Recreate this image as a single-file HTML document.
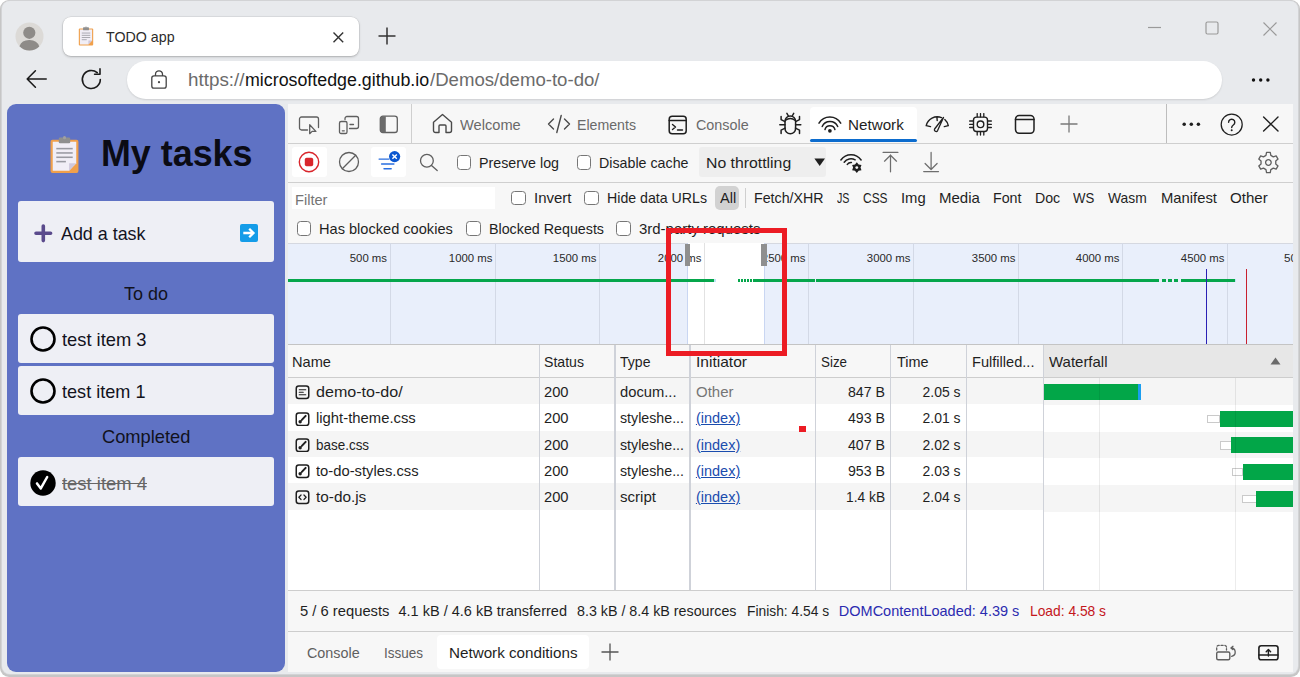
<!DOCTYPE html>
<html lang="en"><head><meta charset="utf-8"><title>TODO app</title>
<style>
html,body{margin:0;padding:0;background:#fff;}
body{width:1300px;height:677px;position:relative;overflow:hidden;font-family:"Liberation Sans", sans-serif;}
.a{position:absolute;display:block;box-sizing:border-box;}
.t{position:absolute;white-space:pre;line-height:1;transform-origin:0 0;}
.r{transform-origin:100% 0;}
</style></head><body>
<div class="a" style="left:0;top:0;width:1300px;height:677px;background:#c6c6c6;border-radius:9px;"></div>
<div class="a" style="left:1.600px;top:1.200px;width:1296.200px;height:673px;background:#e8eaed;border-radius:8px;box-shadow:0 0 0 0.800px #d6d7da;"></div>
<svg class="a" style="left:14.8px;top:22.3px;" width="29" height="29" viewBox="0 0 29 29"><circle cx="14.500" cy="14.500" r="14" fill="#dcdad7"/><circle cx="14.300" cy="10.800" r="6.100" fill="#8e8b88"/><path d="M4.440 24.240A10.300 8.800 0 0 1 24.260 24.540A14 14 0 0 1 4.440 24.240z" fill="#8e8b88"/></svg>
<div class="a" style="left:63px;top:16.800px;width:295.500px;height:39.700px;background:#fff;border-radius:8px;box-shadow:0 0 0 0.600px rgba(0,0,0,.10),0 1px 2.500px rgba(0,0,0,.22);"></div>
<svg class="a" style="left:77.7px;top:26px;" width="16" height="20" viewBox="0 0 20 25"><rect x="1" y="3" width="18" height="21.500" rx="1.300" fill="#f0a04b"/><path d="M2.400 4.400h15.200v13.800l-4.600 4.900H2.400z" fill="#f1eef6"/><path d="M17.600 18.200h-4.600v4.900z" fill="#cfc8dc"/><rect x="6.300" y="1.600" width="7.400" height="3.800" rx="0.800" fill="#8f8f8f"/><circle cx="10" cy="1.700" r="1" fill="#a0a0a0"/><rect x="4.700" y="8.300" width="10.600" height="1" fill="#9a9aa2"/><rect x="4.700" y="11.100" width="10.600" height="1" fill="#9a9aa2"/><rect x="4.700" y="13.900" width="10.600" height="1" fill="#9a9aa2"/><rect x="4.700" y="16.700" width="6.200" height="1" fill="#9a9aa2"/></svg>
<span class="t" style="top:30.03px;font-size:14.5px;color:#2b2b2b;left:106.00px;transform:scaleX(0.9820);">TODO app</span>
<svg class="a" style="left:332px;top:30.5px;" width="13" height="13" viewBox="0 0 13 13"><path d="M1.500 1.500l9.700 9.700M11.200 1.500l-9.700 9.700" stroke="#333" stroke-width="1.400" fill="none"/></svg>
<svg class="a" style="left:378px;top:27px;" width="18" height="18" viewBox="0 0 18 18"><path d="M9 0.500v17M0.500 9h17" stroke="#333" stroke-width="1.500" fill="none"/></svg>
<svg class="a" style="left:1148px;top:26px;" width="14" height="3" viewBox="0 0 14 3"><path d="M0 1.500h13" stroke="#9a9a9a" stroke-width="1.200"/></svg>
<svg class="a" style="left:1205px;top:21px;" width="14" height="14" viewBox="0 0 14 14"><rect x="1" y="1" width="12" height="12" rx="1.500" stroke="#9a9a9a" stroke-width="1.200" fill="none"/></svg>
<svg class="a" style="left:1263px;top:21.5px;" width="14" height="14" viewBox="0 0 14 14"><path d="M0.500 0.500l13 13M13.500 0.500l-13 13" stroke="#9a9a9a" stroke-width="1.200" fill="none"/></svg>
<svg class="a" style="left:26px;top:69px;" width="22" height="20" viewBox="0 0 22 20"><path d="M1.200 10h19M9.400 1.800L1.200 10l8.200 8.200" stroke="#1b1b1b" stroke-width="1.600" fill="none" stroke-linecap="round" stroke-linejoin="round"/></svg>
<svg class="a" style="left:80px;top:68px;" width="23" height="23" viewBox="0 0 23 23"><path d="M20.300 11.500a9 9 0 1 1-3.100-6.800" stroke="#1b1b1b" stroke-width="1.600" fill="none" stroke-linecap="round"/><path d="M14.600 6.300h5.400V0.900" stroke="#1b1b1b" stroke-width="1.600" fill="none" stroke-linecap="round" stroke-linejoin="round"/></svg>
<div class="a" style="left:127px;top:61.300px;width:1095px;height:37.600px;background:#fff;border-radius:18.800px;box-shadow:0 1px 2px rgba(0,0,0,.12);"></div>
<svg class="a" style="left:150px;top:70px;" width="18" height="19" viewBox="0 0 18 19"><rect x="1.800" y="5.900" width="14.400" height="12.300" rx="2.200" stroke="#444" stroke-width="1.300" fill="none"/><path d="M5.500 5.900V4.300a3.500 3.500 0 0 1 7 0v1.600" stroke="#444" stroke-width="1.300" fill="none"/><circle cx="9" cy="12.200" r="1.100" fill="#444"/></svg>
<span class="t" style="top:72.29px;font-size:17.5px;color:#6b6b6b;left:188.00px;transform:scaleX(1.0756);">https://</span>
<span class="t" style="top:72.29px;font-size:17.5px;color:#111;left:244.80px;transform:scaleX(1.0179);">microsoftedge.github.io</span>
<span class="t" style="top:72.29px;font-size:17.5px;color:#6b6b6b;left:429.50px;transform:scaleX(1.0626);">/Demos/demo-to-do/</span>
<svg class="a" style="left:1251px;top:77px;" width="20" height="6" viewBox="0 0 20 6"><circle cx="2.500" cy="3" r="1.700" fill="#111"/><circle cx="9.700" cy="3" r="1.700" fill="#111"/><circle cx="16.900" cy="3" r="1.700" fill="#111"/></svg>
<div class="a" style="left:7px;top:104.2px;width:278px;height:567.6px;background:#5f72c4;border-radius:9px;"></div>
<svg class="a" style="left:49.3px;top:134.8px;" width="31" height="38.7" viewBox="0 0 20 25"><rect x="1" y="3" width="18" height="21.500" rx="1.300" fill="#f0a04b"/><path d="M2.400 4.400h15.200v13.800l-4.600 4.900H2.400z" fill="#f1eef6"/><path d="M17.600 18.200h-4.600v4.900z" fill="#cfc8dc"/><rect x="6.300" y="1.600" width="7.400" height="3.800" rx="0.800" fill="#8f8f8f"/><circle cx="10" cy="1.700" r="1" fill="#a0a0a0"/><rect x="4.700" y="8.300" width="10.600" height="1" fill="#9a9aa2"/><rect x="4.700" y="11.100" width="10.600" height="1" fill="#9a9aa2"/><rect x="4.700" y="13.900" width="10.600" height="1" fill="#9a9aa2"/><rect x="4.700" y="16.700" width="6.200" height="1" fill="#9a9aa2"/></svg>
<span class="t" style="top:135.43px;font-size:37.3px;color:#0b0b14;font-weight:700;left:101.40px;transform:scaleX(0.9614);">My tasks</span>
<div class="a" style="left:18px;top:201px;width:256px;height:61px;background:#eeeff5;border-radius:3px;"></div>
<svg class="a" style="left:34px;top:224px;" width="19" height="19" viewBox="0 0 19 19"><path d="M9.300 2v14.600M2 9.300h14.600" stroke="#5a4a8c" stroke-width="3.600" stroke-linecap="round" fill="none"/></svg>
<span class="t" style="top:224.42px;font-size:19px;color:#14141f;left:61.00px;transform:scaleX(0.9412);">Add a task</span>
<svg class="a" style="left:240px;top:224px;" width="18" height="18" viewBox="0 0 18 18"><rect width="18" height="18" rx="2" fill="#149ce8"/><path d="M3.300 9h10M9.200 4.700l4.300 4.300-4.300 4.300" stroke="#fff" stroke-width="2.300" fill="none"/></svg>
<span class="t" style="top:284.22px;font-size:19px;color:#12121c;left:124.40px;transform:scaleX(0.9466);">To do</span>
<div class="a" style="left:18px;top:314px;width:256px;height:48.5px;background:#eeeff5;border-radius:3px;"></div>
<div class="a" style="left:18px;top:366.3px;width:256px;height:48.5px;background:#eeeff5;border-radius:3px;"></div>
<svg class="a" style="left:30px;top:325.5px;" width="26" height="26" viewBox="0 0 26 26"><circle cx="13" cy="13" r="11.500" stroke="#000" stroke-width="2.600" fill="none"/></svg>
<svg class="a" style="left:30px;top:377.5px;" width="26" height="26" viewBox="0 0 26 26"><circle cx="13" cy="13" r="11.500" stroke="#000" stroke-width="2.600" fill="none"/></svg>
<span class="t" style="top:329.82px;font-size:19px;color:#12121c;left:62.00px;transform:scaleX(0.9640);">test item 3</span>
<span class="t" style="top:381.82px;font-size:19px;color:#12121c;left:62.00px;transform:scaleX(0.9526);">test item 1</span>
<span class="t" style="top:427.22px;font-size:19px;color:#12121c;left:101.80px;transform:scaleX(0.9620);">Completed</span>
<div class="a" style="left:18px;top:457.2px;width:256px;height:49px;background:#eeeff5;border-radius:3px;"></div>
<svg class="a" style="left:30px;top:469.5px;" width="26" height="26" viewBox="0 0 26 26"><circle cx="13" cy="13" r="12.700" fill="#000"/><path d="M7 13.400l3.800 5 6.400-11.400" stroke="#fff" stroke-width="2.500" fill="none" stroke-linecap="round" stroke-linejoin="round"/></svg>
<span class="t" style="top:473.82px;font-size:19px;color:#666;left:62.00px;transform:scaleX(0.9697);text-decoration:line-through;">test item 4</span>
<div class="a" style="left:287.5px;top:104.3px;width:1005.7px;height:567.7px;background:#f7f7f7;"></div>
<div class="a" style="left:287.5px;top:143px;width:1005.7px;height:1px;background:#cfcfcf;"></div>
<div class="a" style="left:411px;top:104.3px;width:1px;height:38.7px;background:#cfcfcf;"></div>
<div class="a" style="left:1166px;top:104.3px;width:1px;height:38.7px;background:#bdbdbd;"></div>
<svg class="a" style="left:298px;top:115px;" width="22" height="20" viewBox="0 0 22 20"><path d="M9.500 15H3.500a2 2 0 0 1-2-2V4a2 2 0 0 1 2-2h15a2 2 0 0 1 2 2v8.500" stroke="#5f5f5f" stroke-width="1.3" fill="none" stroke-linecap="round" stroke-linejoin="round"/><path d="M11.700 9.700v9l2.400-2.300h3.800z" stroke="#5f5f5f" stroke-width="1.3" fill="none" stroke-linecap="round" stroke-linejoin="round"/></svg>
<svg class="a" style="left:338px;top:114px;" width="22" height="21" viewBox="0 0 22 21"><path d="M7 5.500V4.500a2 2 0 0 1 2-2h9.500a2 2 0 0 1 2 2v8a2 2 0 0 1-2 2H11.500" stroke="#5f5f5f" stroke-width="1.3" fill="none" stroke-linecap="round" stroke-linejoin="round"/><rect x="1.500" y="7.500" width="7.500" height="12" rx="1.600" stroke="#5f5f5f" stroke-width="1.3" fill="none" stroke-linecap="round" stroke-linejoin="round"/><path d="M4.300 16.800h2M12 10.500h3.500" stroke="#5f5f5f" stroke-width="1.3" fill="none" stroke-linecap="round" stroke-linejoin="round"/></svg>
<svg class="a" style="left:379.3px;top:114.5px;" width="20" height="19" viewBox="0 0 20 19"><rect x="1.300" y="1.200" width="17" height="16.300" rx="2.600" stroke="#5f5f5f" stroke-width="1.3" fill="none" stroke-linecap="round" stroke-linejoin="round"/><path d="M3.900 1.200h2.900v16.300H3.900a2.600 2.600 0 0 1-2.600-2.600V3.800A2.600 2.600 0 0 1 3.900 1.200z" fill="#6b6b6b"/></svg>
<svg class="a" style="left:432px;top:113px;" width="21" height="21" viewBox="0 0 21 21"><path d="M1.500 9.300L10.500 1.500l9 7.800V17.500a2 2 0 0 1-2 2h-3.500v-6.500a1 1 0 0 0-1-1h-5a1 1 0 0 0-1 1v6.500H3.500a2 2 0 0 1-2-2z" stroke="#4a4a4a" stroke-width="1.4" fill="none" stroke-linecap="round" stroke-linejoin="round"/></svg>
<span class="t" style="top:118.03px;font-size:14.5px;color:#6a6a6a;left:460.00px;transform:scaleX(1.0088);">Welcome</span>
<svg class="a" style="left:547px;top:114px;" width="24" height="20" viewBox="0 0 24 20"><path d="M6.500 5L1.500 10l5 5M17.500 5l5 5-5 5M14.200 1.500L9.800 18.500" stroke="#4a4a4a" stroke-width="1.4" fill="none" stroke-linecap="round" stroke-linejoin="round"/></svg>
<span class="t" style="top:118.03px;font-size:14.5px;color:#6a6a6a;left:577.00px;transform:scaleX(0.9760);">Elements</span>
<svg class="a" style="left:668px;top:114.5px;" width="20" height="20" viewBox="0 0 20 20"><rect x="1.200" y="1.200" width="17" height="17.600" rx="3" stroke="#1f1f1f" fill="none" stroke-linecap="round" stroke-linejoin="round" stroke-width="1.500"/><path d="M1.200 5.600h17" stroke="#1f1f1f" fill="none" stroke-linecap="round" stroke-linejoin="round" stroke-width="1.500"/><path d="M4.500 9.500l3 2.500-3 2.500M9.500 15h5" stroke="#1f1f1f" stroke-width="1.4" fill="none" stroke-linecap="round" stroke-linejoin="round"/></svg>
<span class="t" style="top:118.03px;font-size:14.5px;color:#6a6a6a;left:695.50px;transform:scaleX(0.9905);">Console</span>
<svg class="a" style="left:779px;top:112px;" width="23" height="23" viewBox="0 0 23 23"><rect x="6" y="3.900" width="10.600" height="17.900" rx="5.300" stroke="#1f1f1f" fill="none" stroke-linecap="round" stroke-linejoin="round" stroke-width="1.500"/><path d="M6.600 8.300a7 7 0 0 1 9.400 0M7.900 1.400l1.500 2.600M14.700 1.400l-1.500 2.600M6 12.800H0.800M16.600 12.800h5.200M6 9.600L2.100 7.600V4.600M16.600 9.600l3.900-2V4.600M6.200 16.200l-4.100 2v3.200M16.400 16.200l4.100 2v3.200" stroke="#1f1f1f" fill="none" stroke-linecap="round" stroke-linejoin="round" stroke-width="1.500"/></svg>
<div class="a" style="left:810px;top:107px;width:107px;height:34.500px;background:#fff;border-radius:4px 4px 0 0;"></div>
<div class="a" style="left:810px;top:139px;width:107px;height:3.2px;background:#0c6cce;border-radius:2px;"></div>
<svg class="a" style="left:818px;top:116px;" width="24" height="18" viewBox="0 0 24 18"><path d="M1 7.200A12.600 12.600 0 0 1 22.700 7.200M4.200 10.500A8.500 8.500 0 0 1 19.700 10.500M7 13.500A5.100 5.100 0 0 1 16.900 13.500" stroke="#1f1f1f" fill="none" stroke-linecap="round" stroke-linejoin="round" stroke-width="1.500"/><circle cx="11.900" cy="14.800" r="1.850" fill="#1f1f1f"/></svg>
<span class="t" style="top:118.03px;font-size:14.5px;color:#1f1f1f;left:847.50px;transform:scaleX(1.0491);">Network</span>
<svg class="a" style="left:925px;top:116px;" width="25" height="17" viewBox="0 0 25 17"><path d="M1.200 9.600A11.500 11.500 0 0 1 16.500 1.600M19.800 3.600A11.500 11.500 0 0 1 23.300 9.600M1.200 9.600l4.300 1M23.300 9.600l-4 1M11.900 0.900l0.300 3.600" stroke="#1f1f1f" stroke-width="1.4" fill="none" stroke-linecap="round" stroke-linejoin="round"/><path d="M18.500 1.500L12.600 14.600a1.700 1.700 0 0 1-3-1.600z" stroke="#1f1f1f" fill="none" stroke-linecap="round" stroke-linejoin="round" stroke-width="1.300"/></svg>
<svg class="a" style="left:969px;top:113px;" width="23" height="23" viewBox="0 0 23 23"><rect x="4.500" y="4.100" width="14" height="14.400" rx="3" stroke="#1f1f1f" stroke-width="1.4" fill="none" stroke-linecap="round" stroke-linejoin="round"/><circle cx="11.500" cy="11.300" r="3.300" stroke="#1f1f1f" stroke-width="1.4" fill="none" stroke-linecap="round" stroke-linejoin="round"/><path d="M8.200 0.600v3.200M11.500 0.600v3.200M14.800 0.600v3.200M8.200 18.800v3.200M11.500 18.800v3.200M14.800 18.800v3.200M0.600 8h3.600M0.600 11.300h3.600M0.600 14.500h3.600M18.800 8h3.600M18.800 11.300h3.600M18.800 14.500h3.600" stroke="#1f1f1f" fill="none" stroke-linecap="round" stroke-linejoin="round" stroke-width="1.300"/></svg>
<svg class="a" style="left:1014px;top:114px;" width="21" height="21" viewBox="0 0 21 21"><rect x="1.500" y="1.500" width="18.500" height="17.700" rx="3.600" stroke="#1f1f1f" fill="none" stroke-linecap="round" stroke-linejoin="round" stroke-width="1.500"/><path d="M1.500 5.600h18.500" stroke="#1f1f1f" fill="none" stroke-linecap="round" stroke-linejoin="round" stroke-width="1.500"/></svg>
<svg class="a" style="left:1060px;top:115px;" width="18" height="18" viewBox="0 0 18 18"><path d="M9 0.500v17M0.500 9h17" stroke="#7a7a7a" stroke-width="1.300" fill="none"/></svg>
<svg class="a" style="left:1182px;top:121px;" width="19" height="6.5" viewBox="0 0 19 6.5"><circle cx="2.200" cy="3.250" r="1.750" fill="#1f1f1f"/><circle cx="9.300" cy="3.250" r="1.750" fill="#1f1f1f"/><circle cx="16.400" cy="3.250" r="1.750" fill="#1f1f1f"/></svg>
<svg class="a" style="left:1219.5px;top:112.5px;" width="23" height="23" viewBox="0 0 23 23"><circle cx="11.700" cy="11.500" r="10.500" stroke="#1f1f1f" fill="none" stroke-linecap="round" stroke-linejoin="round" stroke-width="1.250"/><path d="M8.600 9.300a3.100 3.100 0 1 1 4.700 2.700c-1 .7-1.600 1.200-1.600 2.600" stroke="#1f1f1f" fill="none" stroke-linecap="round" stroke-linejoin="round" stroke-width="1.400"/><circle cx="11.700" cy="17.200" r="1" fill="#1f1f1f"/></svg>
<svg class="a" style="left:1262px;top:116px;" width="18" height="17" viewBox="0 0 18 17"><path d="M1.600 1.100l14.400 14M16 1.100L1.600 15.100" stroke="#1f1f1f" fill="none" stroke-linecap="round" stroke-linejoin="round" stroke-width="1.400"/></svg>
<div class="a" style="left:287.5px;top:182px;width:1005.7px;height:1px;background:#cfcfcf;"></div>
<div class="a" style="left:291.5px;top:147.2px;width:35px;height:29.5px;background:#fff;border-radius:3px;"></div>
<svg class="a" style="left:298px;top:151px;" width="22" height="22" viewBox="0 0 22 22"><circle cx="11" cy="11" r="9.700" stroke="#d9262c" stroke-width="1.400" fill="none"/><rect x="6.800" y="6.800" width="8.400" height="8.400" rx="1.800" fill="#d9262c"/></svg>
<svg class="a" style="left:338px;top:151px;" width="22" height="22" viewBox="0 0 22 22"><circle cx="11" cy="11" r="9.500" stroke="#5f5f5f" stroke-width="1.3" fill="none" stroke-linecap="round" stroke-linejoin="round"/><path d="M17.700 4.300L4.300 17.700" stroke="#5f5f5f" stroke-width="1.3" fill="none" stroke-linecap="round" stroke-linejoin="round"/></svg>
<div class="a" style="left:371px;top:147.2px;width:35px;height:29.5px;background:#fff;border-radius:3px;"></div>
<svg class="a" style="left:377px;top:150px;" width="25" height="22" viewBox="0 0 25 22"><path d="M2.100 9.100h9.700M4.600 14h12.300M7 18.800h7.200" stroke="#2a6fe0" stroke-width="1.400" fill="none" stroke-linecap="round"/><circle cx="17.600" cy="6.600" r="5.600" fill="#0b57d0"/><path d="M15.400 4.400l4.400 4.400M19.800 4.400l-4.400 4.400" stroke="#fff" stroke-width="1.400" fill="none"/></svg>
<svg class="a" style="left:418px;top:152px;" width="21" height="21" viewBox="0 0 21 21"><circle cx="8.900" cy="8.800" r="6.400" stroke="#5f5f5f" stroke-width="1.3" fill="none" stroke-linecap="round" stroke-linejoin="round"/><path d="M13.500 13.400l5.700 5.200" stroke="#5f5f5f" stroke-width="1.3" fill="none" stroke-linecap="round" stroke-linejoin="round"/></svg>
<div class="a" style="left:456.5px;top:155px;width:14.800px;height:14.800px;background:#fff;border:1.400px solid #767676;border-radius:3.500px;"></div>
<span class="t" style="top:156.13px;font-size:14.5px;color:#1f1f1f;left:479.00px;transform:scaleX(0.9827);">Preserve log</span>
<div class="a" style="left:576.5px;top:155px;width:14.800px;height:14.800px;background:#fff;border:1.400px solid #767676;border-radius:3.500px;"></div>
<span class="t" style="top:156.13px;font-size:14.5px;color:#1f1f1f;left:598.50px;transform:scaleX(0.9827);">Disable cache</span>
<div class="a" style="left:699px;top:147.2px;width:127px;height:29.5px;background:#eeeeee;border-radius:3px;"></div>
<span class="t" style="top:156.13px;font-size:14.5px;color:#1f1f1f;left:706.30px;transform:scaleX(1.0897);">No throttling</span>
<svg class="a" style="left:813.5px;top:158.3px;" width="12" height="9" viewBox="0 0 12 9"><path d="M0.400 0.400h10.600L5.700 8z" fill="#1f1f1f"/></svg>
<svg class="a" style="left:840px;top:152px;" width="24" height="22" viewBox="0 0 24 22"><path d="M0.900 7.950A12.300 12.300 0 0 1 21.100 7.950M4.200 10.240A8.300 8.300 0 0 1 15.150 7.810M7.310 12.420A4.500 4.500 0 0 1 11.400 10.520" stroke="#1f1f1f" fill="none" stroke-linecap="round" stroke-linejoin="round" stroke-width="1.500"/><polygon points="16.80,10.20 18.65,12.40 21.48,12.90 20.50,15.60 21.48,18.30 18.65,18.80 16.80,21.00 14.95,18.80 12.12,18.30 13.10,15.60 12.12,12.90 14.95,12.40" fill="#1f1f1f" stroke="#f7f7f7" stroke-width="1.200" paint-order="stroke"/><circle cx="16.800" cy="15.600" r="1.400" fill="#f7f7f7"/></svg>
<svg class="a" style="left:882px;top:151px;" width="18" height="22" viewBox="0 0 18 22"><path d="M1.100 1.400h14.800M8.500 20.800V3.900M2.500 10.200l6-6 6 6" stroke="#6e6e6e" stroke-width="1.250" fill="none" stroke-linecap="round" stroke-linejoin="round"/></svg>
<svg class="a" style="left:922px;top:151px;" width="18" height="22" viewBox="0 0 18 22"><path d="M1.700 20.500h14.800M9.100 1.400v17M3.100 12.500l6 6 6-6" stroke="#6e6e6e" stroke-width="1.250" fill="none" stroke-linecap="round" stroke-linejoin="round"/></svg>
<svg class="a" style="left:1257px;top:150.6px;" width="23" height="23" viewBox="0 0 23 23"><g transform="translate(11.400 11.500)"><path d="M-2.44 -7.09L-1.86 -10.03L1.86 -10.03L2.44 -7.09L4.92 -5.66L7.76 -6.62L9.61 -3.40L7.36 -1.43L7.36 1.43L9.61 3.40L7.76 6.62L4.92 5.66L2.44 7.09L1.86 10.03L-1.86 10.03L-2.44 7.09L-4.92 5.66L-7.76 6.62L-9.61 3.40L-7.36 1.43L-7.36 -1.43L-9.61 -3.40L-7.76 -6.62L-4.92 -5.66z" stroke="#5f5f5f" stroke-width="1.300" fill="none" stroke-linejoin="round"/><circle r="2.800" stroke="#5f5f5f" stroke-width="1.300" fill="none"/></g></svg>
<div class="a" style="left:291.5px;top:186.7px;width:203.5px;height:22px;background:#fff;"></div>
<span class="t" style="top:192.63px;font-size:14.5px;color:#757575;left:295.20px;transform:scaleX(1.0082);">Filter</span>
<div class="a" style="left:511px;top:190.5px;width:14.800px;height:14.800px;background:#fff;border:1.400px solid #767676;border-radius:3.500px;"></div>
<span class="t" style="top:191.33px;font-size:14.5px;color:#1f1f1f;left:533.70px;transform:scaleX(1.0340);">Invert</span>
<div class="a" style="left:584px;top:190.5px;width:14.800px;height:14.800px;background:#fff;border:1.400px solid #767676;border-radius:3.500px;"></div>
<span class="t" style="top:191.33px;font-size:14.5px;color:#1f1f1f;left:606.80px;transform:scaleX(0.9770);">Hide data URLs</span>
<div class="a" style="left:714.8px;top:186px;width:24.4px;height:23.8px;background:#d2d2d2;border-radius:5px;"></div>
<span class="t" style="top:191.33px;font-size:14.5px;color:#1f1f1f;left:719.50px;transform:scaleX(1.0047);">All</span>
<div class="a" style="left:745px;top:188px;width:1px;height:19.5px;background:#cfcfcf;"></div>
<span class="t" style="top:191.33px;font-size:14.5px;color:#1f1f1f;left:754.00px;transform:scaleX(0.9814);">Fetch/XHR</span>
<span class="t" style="top:191.33px;font-size:14.5px;color:#1f1f1f;left:837.00px;transform:scaleX(0.7387);">JS</span>
<span class="t" style="top:191.33px;font-size:14.5px;color:#1f1f1f;left:862.60px;transform:scaleX(0.8247);">CSS</span>
<span class="t" style="top:191.33px;font-size:14.5px;color:#1f1f1f;left:900.80px;transform:scaleX(1.0218);">Img</span>
<span class="t" style="top:191.33px;font-size:14.5px;color:#1f1f1f;left:938.50px;transform:scaleX(1.0354);">Media</span>
<span class="t" style="top:191.33px;font-size:14.5px;color:#1f1f1f;left:993.00px;transform:scaleX(0.9822);">Font</span>
<span class="t" style="top:191.33px;font-size:14.5px;color:#1f1f1f;left:1034.80px;transform:scaleX(0.9769);">Doc</span>
<span class="t" style="top:191.33px;font-size:14.5px;color:#1f1f1f;left:1073.20px;transform:scaleX(0.9118);">WS</span>
<span class="t" style="top:191.33px;font-size:14.5px;color:#1f1f1f;left:1108.30px;transform:scaleX(0.9545);">Wasm</span>
<span class="t" style="top:191.33px;font-size:14.5px;color:#1f1f1f;left:1161.00px;transform:scaleX(1.0217);">Manifest</span>
<span class="t" style="top:191.33px;font-size:14.5px;color:#1f1f1f;left:1230.00px;transform:scaleX(1.0396);">Other</span>
<div class="a" style="left:296.5px;top:221px;width:14.800px;height:14.800px;background:#fff;border:1.400px solid #767676;border-radius:3.500px;"></div>
<span class="t" style="top:221.63px;font-size:14.5px;color:#1f1f1f;left:319.00px;transform:scaleX(1.0060);">Has blocked cookies</span>
<div class="a" style="left:466px;top:221px;width:14.800px;height:14.800px;background:#fff;border:1.400px solid #767676;border-radius:3.500px;"></div>
<span class="t" style="top:221.63px;font-size:14.5px;color:#1f1f1f;left:488.50px;transform:scaleX(0.9840);">Blocked Requests</span>
<div class="a" style="left:616.3px;top:221px;width:14.800px;height:14.800px;background:#fff;border:1.400px solid #767676;border-radius:3.500px;"></div>
<span class="t" style="top:221.63px;font-size:14.5px;color:#1f1f1f;left:639.40px;transform:scaleX(1.0317);">3rd-party requests</span>
<div class="a" style="left:287.5px;top:243.3px;width:1005.7px;height:100.89999999999998px;background:#e9effb;"></div>
<div class="a" style="left:287.5px;top:242.60000000000002px;width:1005.7px;height:1px;background:#d5d8e0;"></div>
<div class="a" style="left:686.6px;top:243.3px;width:78px;height:100.89999999999998px;background:#fff;"></div>
<div class="a" style="left:686.6px;top:243.3px;width:1px;height:100.89999999999998px;background:#c9d6f2;"></div>
<div class="a" style="left:764px;top:243.3px;width:1px;height:100.89999999999998px;background:#c9d6f2;"></div>
<div class="a" style="left:390.0px;top:243.3px;width:1px;height:100.89999999999998px;background:#d3d9e6;"></div>
<span class="t r" style="top:252.28px;font-size:11.6px;color:#2a2a2a;right:912.50px;transform:scaleX(0.9808);">500 ms</span>
<div class="a" style="left:494.6px;top:243.3px;width:1px;height:100.89999999999998px;background:#d3d9e6;"></div>
<span class="t r" style="top:252.28px;font-size:11.6px;color:#2a2a2a;right:807.90px;transform:scaleX(0.9805);">1000 ms</span>
<div class="a" style="left:599.2px;top:243.3px;width:1px;height:100.89999999999998px;background:#d3d9e6;"></div>
<span class="t r" style="top:252.28px;font-size:11.6px;color:#2a2a2a;right:703.30px;transform:scaleX(0.9805);">1500 ms</span>
<div class="a" style="left:703.8px;top:243.3px;width:1px;height:100.89999999999998px;background:#e2e2e2;"></div>
<span class="t r" style="top:252.28px;font-size:11.6px;color:#2a2a2a;right:598.70px;transform:scaleX(0.9805);">2000 ms</span>
<div class="a" style="left:808.4px;top:243.3px;width:1px;height:100.89999999999998px;background:#d3d9e6;"></div>
<span class="t r" style="top:252.28px;font-size:11.6px;color:#2a2a2a;right:494.10px;transform:scaleX(0.9805);">2500 ms</span>
<div class="a" style="left:913.0px;top:243.3px;width:1px;height:100.89999999999998px;background:#d3d9e6;"></div>
<span class="t r" style="top:252.28px;font-size:11.6px;color:#2a2a2a;right:389.50px;transform:scaleX(0.9805);">3000 ms</span>
<div class="a" style="left:1017.6px;top:243.3px;width:1px;height:100.89999999999998px;background:#d3d9e6;"></div>
<span class="t r" style="top:252.28px;font-size:11.6px;color:#2a2a2a;right:284.90px;transform:scaleX(0.9805);">3500 ms</span>
<div class="a" style="left:1122.2px;top:243.3px;width:1px;height:100.89999999999998px;background:#d3d9e6;"></div>
<span class="t r" style="top:252.28px;font-size:11.6px;color:#2a2a2a;right:180.30px;transform:scaleX(0.9805);">4000 ms</span>
<div class="a" style="left:1226.8px;top:243.3px;width:1px;height:100.89999999999998px;background:#d3d9e6;"></div>
<span class="t r" style="top:252.28px;font-size:11.6px;color:#2a2a2a;right:75.70px;transform:scaleX(0.9805);">4500 ms</span>
<span class="t" style="top:252.28px;font-size:11.6px;color:#2a2a2a;left:1284.00px;transform:scaleX(1.0073);clip-path:inset(0 3.900px 0 0);">50</span>
<div class="a" style="left:684.8px;top:244px;width:5.6px;height:21.5px;background:#8f8f8f;"></div>
<div class="a" style="left:761.3px;top:244px;width:5.6px;height:21.5px;background:#8f8f8f;"></div>
<div class="a" style="left:287.5px;top:279px;width:426.5px;height:3px;background:#05a64b;"></div>
<div class="a" style="left:714px;top:279px;width:2px;height:3px;background:#bfe3f5;"></div>
<div class="a" style="left:738px;top:279px;width:1.7px;height:3px;background:#05a64b;"></div>
<div class="a" style="left:741px;top:279px;width:1.7px;height:3px;background:#05a64b;"></div>
<div class="a" style="left:744px;top:279px;width:1.7px;height:3px;background:#05a64b;"></div>
<div class="a" style="left:747px;top:279px;width:1.7px;height:3px;background:#05a64b;"></div>
<div class="a" style="left:750px;top:279px;width:1.7px;height:3px;background:#05a64b;"></div>
<div class="a" style="left:753px;top:279px;width:62px;height:3px;background:#05a64b;"></div>
<div class="a" style="left:816.3px;top:279px;width:343.10000000000014px;height:3px;background:#05a64b;"></div>
<div class="a" style="left:1162px;top:279px;width:4.3px;height:3px;background:#05a64b;"></div>
<div class="a" style="left:1167.8px;top:279px;width:4.3px;height:3px;background:#05a64b;"></div>
<div class="a" style="left:1174px;top:279px;width:4.3px;height:3px;background:#05a64b;"></div>
<div class="a" style="left:1180.8px;top:279px;width:54.5px;height:3px;background:#05a64b;"></div>
<div class="a" style="left:1235.3px;top:279px;width:1.2px;height:3px;background:#bfe3f5;"></div>
<div class="a" style="left:1206px;top:268.8px;width:1.3px;height:75.39999999999998px;background:#2a1fb4;"></div>
<div class="a" style="left:1246px;top:268.8px;width:1.3px;height:75.39999999999998px;background:#c8202f;"></div>
<div class="a" style="left:287.5px;top:344.2px;width:1005.7px;height:1.2px;background:#c4c4c4;"></div>
<div class="a" style="left:287.5px;top:345.2px;width:1005.7px;height:245.3px;background:#fff;"></div>
<div class="a" style="left:287.5px;top:345.2px;width:1005.7px;height:32.30000000000001px;background:#f7f7f7;"></div>
<div class="a" style="left:1043.5px;top:345.2px;width:249.70000000000005px;height:32.30000000000001px;background:#e7e7e7;"></div>
<div class="a" style="left:287.5px;top:378.2px;width:1005.7px;height:26.30000000000001px;background:#f5f5f5;"></div>
<div class="a" style="left:287.5px;top:430.8px;width:1005.7px;height:26.30000000000001px;background:#f5f5f5;"></div>
<div class="a" style="left:287.5px;top:483.4px;width:1005.7px;height:26.30000000000001px;background:#f5f5f5;"></div>
<div class="a" style="left:287.5px;top:377px;width:1005.7px;height:1px;background:#cdcdcd;"></div>
<div class="a" style="left:538.8px;top:345.2px;width:1.2px;height:245.3px;background:#cfd2d9;"></div>
<div class="a" style="left:614.4px;top:345.2px;width:1.2px;height:245.3px;background:#cfd2d9;"></div>
<div class="a" style="left:689.4px;top:345.2px;width:1.2px;height:245.3px;background:#cfd2d9;"></div>
<div class="a" style="left:814.6px;top:345.2px;width:1.2px;height:245.3px;background:#cfd2d9;"></div>
<div class="a" style="left:889.8px;top:345.2px;width:1.2px;height:245.3px;background:#cfd2d9;"></div>
<div class="a" style="left:965.8px;top:345.2px;width:1.2px;height:245.3px;background:#cfd2d9;"></div>
<div class="a" style="left:1042.6000000000001px;top:345.2px;width:1.2px;height:245.3px;background:#cfd2d9;"></div>
<span class="t" style="top:354.83px;font-size:14.5px;color:#1f1f1f;left:292.30px;transform:scaleX(1.0081);">Name</span>
<span class="t" style="top:354.83px;font-size:14.5px;color:#1f1f1f;left:543.90px;transform:scaleX(0.9730);">Status</span>
<span class="t" style="top:354.83px;font-size:14.5px;color:#1f1f1f;left:620.00px;transform:scaleX(0.9702);">Type</span>
<span class="t" style="top:354.83px;font-size:14.5px;color:#1f1f1f;left:695.90px;transform:scaleX(1.0723);">Initiator</span>
<span class="t" style="top:354.83px;font-size:14.5px;color:#1f1f1f;left:821.00px;transform:scaleX(0.9214);">Size</span>
<span class="t" style="top:354.83px;font-size:14.5px;color:#1f1f1f;left:896.50px;transform:scaleX(0.9941);">Time</span>
<span class="t" style="top:354.83px;font-size:14.5px;color:#1f1f1f;left:972.00px;transform:scaleX(1.0070);">Fulfilled...</span>
<span class="t" style="top:354.83px;font-size:14.5px;color:#1f1f1f;left:1048.80px;transform:scaleX(1.0323);">Waterfall</span>
<svg class="a" style="left:1269.5px;top:356.5px;" width="11" height="8" viewBox="0 0 11 8"><path d="M5.500 0.500L10.500 7.500H0.500z" fill="#6b6b6b"/></svg>
<svg class="a" style="left:294.8px;top:385.2px;" width="15" height="14.5" viewBox="0 0 14.500 14.500"><rect x="1" y="1" width="12.500" height="12.500" rx="2.500" stroke="#1f1f1f" stroke-width="1.500" fill="none" stroke-linejoin="round" stroke-linecap="round"/><path d="M4 4.700h6.500M4 7.250h4M4 9.800h6.500" stroke="#1f1f1f" fill="none" stroke-linejoin="round" stroke-linecap="round" stroke-width="1.100"/></svg>
<span class="t" style="top:384.93px;font-size:14.5px;color:#1f1f1f;left:316.00px;transform:scaleX(1.1089);">demo-to-do/</span>
<span class="t" style="top:384.93px;font-size:14.5px;color:#1f1f1f;left:543.90px;transform:scaleX(1.0123);">200</span>
<span class="t" style="top:384.93px;font-size:14.5px;color:#1f1f1f;left:620.00px;transform:scaleX(1.0160);">docum...</span>
<span class="t" style="top:384.93px;font-size:14.5px;color:#767676;left:695.90px;transform:scaleX(1.0340);">Other</span>
<span class="t r" style="top:384.93px;font-size:14.5px;color:#1f1f1f;right:414.80px;transform:scaleX(0.9761);">847 B</span>
<span class="t r" style="top:384.93px;font-size:14.5px;color:#1f1f1f;right:339.20px;transform:scaleX(0.9620);">2.05 s</span>
<svg class="a" style="left:294.8px;top:411.5px;" width="15" height="14.5" viewBox="0 0 14.500 14.500"><rect x="1" y="1" width="12.500" height="12.500" rx="2.500" stroke="#1f1f1f" stroke-width="1.500" fill="none" stroke-linejoin="round" stroke-linecap="round"/><path d="M10.400 3.900L6.600 7.900" stroke="#1f1f1f" fill="none" stroke-linejoin="round" stroke-linecap="round" stroke-width="2"/><circle cx="4.900" cy="9.700" r="1.700" fill="#1f1f1f"/></svg>
<span class="t" style="top:411.23px;font-size:14.5px;color:#1f1f1f;left:316.00px;transform:scaleX(1.0234);">light-theme.css</span>
<span class="t" style="top:411.23px;font-size:14.5px;color:#1f1f1f;left:543.90px;transform:scaleX(1.0123);">200</span>
<span class="t" style="top:411.23px;font-size:14.5px;color:#1f1f1f;left:620.00px;transform:scaleX(0.9804);">styleshe...</span>
<span class="t" style="top:411.23px;font-size:14.5px;color:#1a4cae;left:695.90px;text-decoration:underline;">(index)</span>
<span class="t r" style="top:411.23px;font-size:14.5px;color:#1f1f1f;right:414.80px;transform:scaleX(0.9761);">493 B</span>
<span class="t r" style="top:411.23px;font-size:14.5px;color:#1f1f1f;right:339.20px;transform:scaleX(0.9620);">2.01 s</span>
<svg class="a" style="left:294.8px;top:437.8px;" width="15" height="14.5" viewBox="0 0 14.500 14.500"><rect x="1" y="1" width="12.500" height="12.500" rx="2.500" stroke="#1f1f1f" stroke-width="1.500" fill="none" stroke-linejoin="round" stroke-linecap="round"/><path d="M10.400 3.900L6.600 7.900" stroke="#1f1f1f" fill="none" stroke-linejoin="round" stroke-linecap="round" stroke-width="2"/><circle cx="4.900" cy="9.700" r="1.700" fill="#1f1f1f"/></svg>
<span class="t" style="top:437.53px;font-size:14.5px;color:#1f1f1f;left:316.00px;transform:scaleX(0.9278);">base.css</span>
<span class="t" style="top:437.53px;font-size:14.5px;color:#1f1f1f;left:543.90px;transform:scaleX(1.0123);">200</span>
<span class="t" style="top:437.53px;font-size:14.5px;color:#1f1f1f;left:620.00px;transform:scaleX(0.9804);">styleshe...</span>
<span class="t" style="top:437.53px;font-size:14.5px;color:#1a4cae;left:695.90px;text-decoration:underline;">(index)</span>
<span class="t r" style="top:437.53px;font-size:14.5px;color:#1f1f1f;right:414.80px;transform:scaleX(0.9761);">407 B</span>
<span class="t r" style="top:437.53px;font-size:14.5px;color:#1f1f1f;right:339.20px;transform:scaleX(0.9620);">2.02 s</span>
<svg class="a" style="left:294.8px;top:464.1px;" width="15" height="14.5" viewBox="0 0 14.500 14.500"><rect x="1" y="1" width="12.500" height="12.500" rx="2.500" stroke="#1f1f1f" stroke-width="1.500" fill="none" stroke-linejoin="round" stroke-linecap="round"/><path d="M10.400 3.900L6.600 7.900" stroke="#1f1f1f" fill="none" stroke-linejoin="round" stroke-linecap="round" stroke-width="2"/><circle cx="4.900" cy="9.700" r="1.700" fill="#1f1f1f"/></svg>
<span class="t" style="top:463.83px;font-size:14.5px;color:#1f1f1f;left:316.00px;transform:scaleX(1.0185);">to-do-styles.css</span>
<span class="t" style="top:463.83px;font-size:14.5px;color:#1f1f1f;left:543.90px;transform:scaleX(1.0123);">200</span>
<span class="t" style="top:463.83px;font-size:14.5px;color:#1f1f1f;left:620.00px;transform:scaleX(0.9804);">styleshe...</span>
<span class="t" style="top:463.83px;font-size:14.5px;color:#1a4cae;left:695.90px;text-decoration:underline;">(index)</span>
<span class="t r" style="top:463.83px;font-size:14.5px;color:#1f1f1f;right:414.80px;transform:scaleX(0.9761);">953 B</span>
<span class="t r" style="top:463.83px;font-size:14.5px;color:#1f1f1f;right:339.20px;transform:scaleX(0.9620);">2.03 s</span>
<svg class="a" style="left:294.8px;top:490.4px;" width="15" height="14.5" viewBox="0 0 14.500 14.500"><rect x="1" y="1" width="12.500" height="12.500" rx="2.500" stroke="#1f1f1f" stroke-width="1.500" fill="none" stroke-linejoin="round" stroke-linecap="round"/><path d="M5.800 5L3.600 7.250l2.200 2.250M8.700 5l2.200 2.250-2.200 2.250" stroke="#1f1f1f" fill="none" stroke-linejoin="round" stroke-linecap="round" stroke-width="1.200"/></svg>
<span class="t" style="top:490.13px;font-size:14.5px;color:#1f1f1f;left:316.00px;transform:scaleX(1.0576);">to-do.js</span>
<span class="t" style="top:490.13px;font-size:14.5px;color:#1f1f1f;left:543.90px;transform:scaleX(1.0123);">200</span>
<span class="t" style="top:490.13px;font-size:14.5px;color:#1f1f1f;left:620.00px;transform:scaleX(1.0388);">script</span>
<span class="t" style="top:490.13px;font-size:14.5px;color:#1a4cae;left:695.90px;text-decoration:underline;">(index)</span>
<span class="t r" style="top:490.13px;font-size:14.5px;color:#1f1f1f;right:414.80px;transform:scaleX(0.9487);">1.4 kB</span>
<span class="t r" style="top:490.13px;font-size:14.5px;color:#1f1f1f;right:339.20px;transform:scaleX(0.9620);">2.04 s</span>
<div class="a" style="left:1043.7px;top:378px;width:249.5px;height:27px;background:#f5f5f5;"></div>
<div class="a" style="left:1043.7px;top:405px;width:249.5px;height:26.69999999999999px;background:#fff;"></div>
<div class="a" style="left:1043.7px;top:431.7px;width:249.5px;height:26.69999999999999px;background:#f5f5f5;"></div>
<div class="a" style="left:1043.7px;top:458.4px;width:249.5px;height:26.600000000000023px;background:#fff;"></div>
<div class="a" style="left:1043.7px;top:485px;width:249.5px;height:26.5px;background:#f5f5f5;"></div>
<div class="a" style="left:1043.5px;top:383.8px;width:94.5px;height:16.2px;background:#02a648;"></div>
<div class="a" style="left:1138px;top:383.8px;width:3.2px;height:16.2px;background:#1a9ef0;"></div>
<div class="a" style="left:1207.2px;top:414.5px;width:13.1px;height:8.400px;background:#fff;border:1px solid #cacaca;"></div>
<div class="a" style="left:1220px;top:410.5px;width:73.20000000000005px;height:16.3px;background:#02a648;"></div>
<div class="a" style="left:1220px;top:441.2px;width:11.5px;height:8.400px;background:#fff;border:1px solid #cacaca;"></div>
<div class="a" style="left:1231.2px;top:437.2px;width:62.0px;height:16.3px;background:#02a648;"></div>
<div class="a" style="left:1232px;top:467.9px;width:11.1px;height:8.400px;background:#fff;border:1px solid #cacaca;"></div>
<div class="a" style="left:1242.8px;top:463.9px;width:50.40000000000009px;height:16.3px;background:#02a648;"></div>
<div class="a" style="left:1242.3px;top:494.6px;width:14.4px;height:8.400px;background:#fff;border:1px solid #cacaca;"></div>
<div class="a" style="left:1256.4px;top:490.6px;width:36.799999999999955px;height:16.3px;background:#02a648;"></div>
<div class="a" style="left:1099.1px;top:378px;width:1px;height:212.5px;background:rgba(0,0,0,0.075);"></div>
<div class="a" style="left:1234.9px;top:378px;width:1px;height:212.5px;background:rgba(0,0,0,0.075);"></div>
<div class="a" style="left:799px;top:426px;width:7px;height:6px;background:#ec1c24;"></div>
<div class="a" style="left:287.5px;top:590.5px;width:1005.7px;height:41px;background:#f7f7f7;"></div>
<div class="a" style="left:287.5px;top:590px;width:1005.7px;height:1px;background:#cdcdcd;"></div>
<div class="a" style="left:287.5px;top:631px;width:1005.7px;height:1.2px;background:#cdcdcd;"></div>
<span class="t" style="top:604.33px;font-size:14.5px;color:#1f1f1f;left:300.00px;transform:scaleX(1.0187);">5 / 6 requests</span>
<span class="t" style="top:604.33px;font-size:14.5px;color:#1f1f1f;left:398.50px;">4.1 kB / 4.6 kB transferred</span>
<span class="t" style="top:604.33px;font-size:14.5px;color:#1f1f1f;left:577.30px;transform:scaleX(0.9846);">8.3 kB / 8.4 kB resources</span>
<span class="t" style="top:604.33px;font-size:14.5px;color:#1f1f1f;left:746.60px;transform:scaleX(0.9530);">Finish: 4.54 s</span>
<span class="t" style="top:604.33px;font-size:14.5px;color:#2b2bb0;left:838.80px;">DOMContentLoaded: 4.39 s</span>
<span class="t" style="top:604.33px;font-size:14.5px;color:#c4161c;left:1030.00px;transform:scaleX(0.9520);">Load: 4.58 s</span>
<div class="a" style="left:287.5px;top:632.2px;width:1005.7px;height:39.799999999999955px;background:#f7f7f7;"></div>
<div class="a" style="left:436.7px;top:635px;width:152.6px;height:33.5px;background:#fff;border-radius:4px;"></div>
<span class="t" style="top:646.03px;font-size:14.5px;color:#5f5f5f;left:306.80px;transform:scaleX(0.9905);">Console</span>
<span class="t" style="top:646.03px;font-size:14.5px;color:#5f5f5f;left:384.00px;transform:scaleX(0.9303);">Issues</span>
<span class="t" style="top:646.03px;font-size:14.5px;color:#1f1f1f;left:448.60px;transform:scaleX(1.0490);">Network conditions</span>
<svg class="a" style="left:600.5px;top:643px;" width="18" height="18" viewBox="0 0 18 18"><path d="M9 0.500v17M0.500 9h17" stroke="#555" stroke-width="1.300" fill="none"/></svg>
<svg class="a" style="left:1214.5px;top:644px;" width="23" height="17" viewBox="0 0 23 17"><path d="M1.700 6V3.300a2 2 0 0 1 2-2h5.800a2 2 0 0 1 2 2V6" stroke="#5f5f5f" stroke-width="1.3" fill="none" stroke-linecap="round" stroke-linejoin="round" stroke-dasharray="2.200 1.700"/><rect x="1.700" y="8" width="13.100" height="7.700" rx="1.500" stroke="#5f5f5f" fill="none" stroke-linecap="round" stroke-linejoin="round" stroke-width="1.400"/><path d="M16.300 3.900c4.600 0.200 5.600 7.300 0.400 8.400M18 2.300l-2.100 1.600 1.900 1.700" stroke="#5f5f5f" stroke-width="1.3" fill="none" stroke-linecap="round" stroke-linejoin="round"/></svg>
<svg class="a" style="left:1258px;top:644px;" width="22" height="17" viewBox="0 0 22 17"><rect x="0.900" y="1.700" width="19.100" height="14" rx="2.300" stroke="#1f1f1f" fill="none" stroke-linecap="round" stroke-linejoin="round" stroke-width="1.600"/><path d="M0.900 11h19.100" stroke="#1f1f1f" fill="none" stroke-linecap="round" stroke-linejoin="round" stroke-width="1.500"/><path d="M10.400 12V5.700M8.200 7.800l2.200-2.200 2.200 2.200" stroke="#1f1f1f" fill="none" stroke-linecap="round" stroke-linejoin="round" stroke-width="1.400"/></svg>
<div class="a" style="left:666px;top:228.300px;width:121px;height:128.200px;border:5.500px solid #ec1c24;"></div>
</body></html>
